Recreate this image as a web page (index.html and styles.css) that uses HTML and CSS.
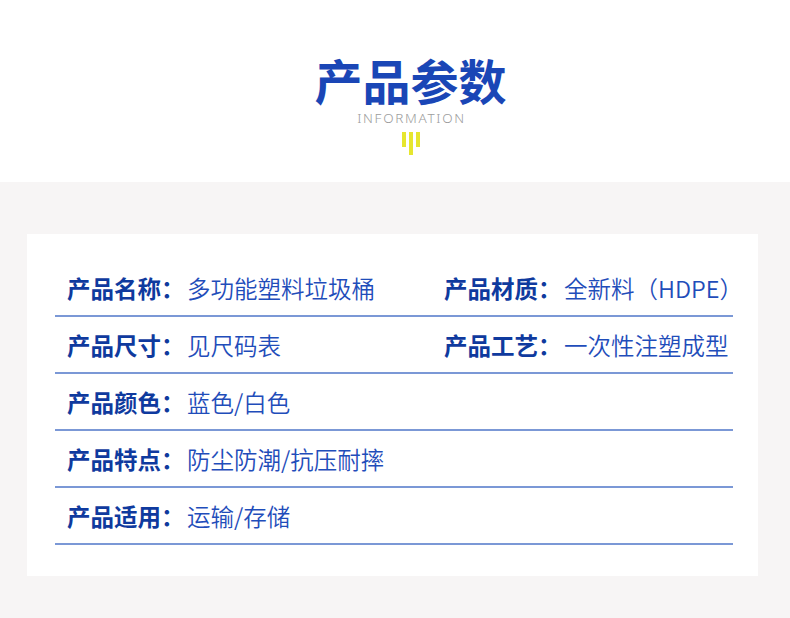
FILE: index.html
```html
<!DOCTYPE html>
<html lang="zh-CN">
<head>
<meta charset="utf-8">
<link rel="stylesheet" href="styles.css">
</head>
<body>
<header class="hero">
  <h1 class="title">产品参数</h1>
  <div class="subtitle">INFORMATION</div>
  <div class="bars"><span class="bar short"></span><span class="bar long"></span><span class="bar short"></span></div>
</header>
<main class="panel">
  <section class="card">
    <div class="row">
      <div class="cell"><span class="label">产品名称：</span><span class="value">多功能塑料垃圾桶</span></div>
      <div class="cell"><span class="label">产品材质：</span><span class="value">全新料（HDPE）</span></div>
    </div>
    <div class="row">
      <div class="cell"><span class="label">产品尺寸：</span><span class="value">见尺码表</span></div>
      <div class="cell"><span class="label">产品工艺：</span><span class="value">一次性注塑成型</span></div>
    </div>
    <div class="row">
      <div class="cell"><span class="label">产品颜色：</span><span class="value">蓝色/白色</span></div>
    </div>
    <div class="row">
      <div class="cell"><span class="label">产品特点：</span><span class="value">防尘防潮/抗压耐摔</span></div>
    </div>
    <div class="row">
      <div class="cell"><span class="label">产品适用：</span><span class="value">运输/存储</span></div>
    </div>
  </section>
</main>
</body>
</html>
```
FILE: styles.css
```css
* { box-sizing: border-box; }
html, body { margin: 0; padding: 0; }
body {
  width: 790px;
  height: 618px;
  overflow: hidden;
  background: #f7f5f5;
  font-family: "Noto Sans CJK SC", "Noto Sans", sans-serif;
}
.hero {
  height: 182px;
  background: #ffffff;
  display: flex;
  flex-direction: column;
  align-items: center;
  padding-top: 55px;
  padding-left: 31px;
}
.title {
  margin: 0;
  font-size: 48px;
  line-height: 48px;
  font-weight: 700;
  color: #1a46b6;
}
.subtitle {
  margin-top: 7px;
  font-family: "Noto Sans", sans-serif;
  font-size: 13.5px;
  line-height: 16px;
  letter-spacing: 1.7px;
  color: #9c9c9c;
  font-weight: 300;
  padding-left: 2px;
}
.bars {
  margin-top: 6px;
  display: flex;
  gap: 3px;
  align-items: flex-start;
}
.bar {
  display: block;
  width: 4px;
  background: #e6e62e;
}
.bar.short { height: 15px; }
.bar.long { height: 23px; }
.panel {
  padding: 52px 32px 0 27px;
}
.card {
  background: #ffffff;
  width: 731px;
  padding: 26px 25px 31px 28px;
}
.row {
  display: grid;
  grid-template-columns: 377px 1fr;
  padding: 13px 0 12px 12px;
  border-bottom: 2px solid #7b98d6;
}
.cell {
  display: flex;
  align-items: center;
  font-size: 23.5px;
  line-height: 30px;
  white-space: nowrap;
}
.label {
  width: 120px;
  font-weight: 700;
  color: #0f3a9e;
}
.value {
  color: #1f4dba;
  font-weight: 350;
}
```
